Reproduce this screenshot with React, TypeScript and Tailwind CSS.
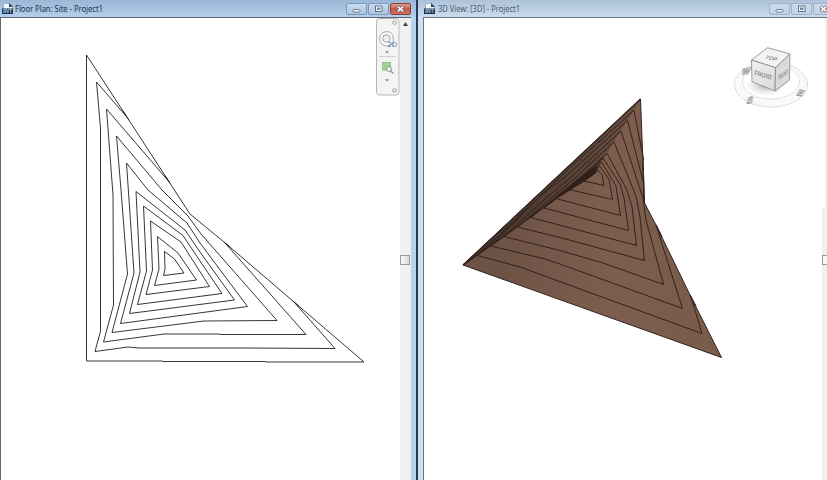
import React from "react";

const planContours = [
  "86.5,55 86.5,361 162,361 163,361.5 265,361.5 266,362 364,362 224,242 190,214 86.5,55",
  "127,117.2 96.5,82 100.5,128 100.5,331 95,351.5 128,347 139,348 243,348 335,348.5 294,302",
  "169,181.7 106.5,109 113,195 113.5,305 103.5,342 164,334 219,334 220,334.5 306,334.5 225,243",
  "116.5,136 162,190 188,216 201,234 277,320.5 204,321 112,332.5 127.5,274 121,190 116.5,136",
  "126.5,163 148,190 187,223 200,243 247.5,306.5 120.5,323.5 134,273 126.5,163",
  "136,191.5 185,230 200,252 234.5,300 129.5,313.5 140,272 136,191.5",
  "143.5,206 183,235.5 200,261 222,293.5 137.5,304.5 146.5,271 143.5,206",
  "150.5,221 181,242 209.5,286.5 146,294.5 152.5,270 150.5,221",
  "157.5,236.5 178,253 196.5,280 154.5,285.5 159,269 157.5,236.5",
  "164.5,251.5 174.5,259 184,273 163.5,275.5 165,269 164.5,251.5",
];

const frontContours = [
  "477.5,255.5 520,267 560,281.7 702,333.5 691,297",
  "491,246 545,259 560,264 682.5,308.5 656,225",
  "504,236.5 560,250.5 603,263 663.5,284.5 646,220 643,198 621,131",
  "517.5,227 560,237.5 644.5,260.5 640,217 636,196 614,142",
  "531,217.5 636.5,245.5 632,207 627,190 607,153.5",
  "544,208 628.5,230.5 624,198 620,184 603,158",
  "556,198.5 620.5,215.5 616,186 601.5,162",
  "569,189.5 612.5,199.5 609,179 599.5,166",
  "584,181 604,185.5 602,175 597.5,170",
  "634,110.5 643.7,160",
  "627.5,120.5 643.8,184",
];

const backContours = [
  "634,110.5 575,163 477.5,255.5",
  "627.5,120.5 565,177 540,196 491,246",
  "621,131 570,178 545,199 504,236.5",
  "614,142 575,178 554,196 517.5,227",
  "607,153.5 580,178 531,217.5",
  "603,158 580,180 544,208",
  "601.5,162 556,198.5",
  "599.5,166 569,189.5",
  "597.5,170 584,181",
];

function DocIcon() {
  return (
    <svg className="h-[12px] w-[12px] shrink-0" viewBox="0 0 12 12">
      <path d="M1.5.5h6l3 3v5h-9z" fill="#f7fafd" stroke="#8ba0b5" strokeWidth=".8" />
      <path d="M7 0l4 4H7z" fill="#174575" />
      <rect x="0" y="5.5" width="11" height="5.5" fill="#173653" />
      <text x="1.2" y="10" fontSize="4.5" fontWeight="700" fill="#bfd5e8" fontFamily="Liberation Sans, sans-serif">RVT</text>
    </svg>
  );
}

function CaptionButton({ kind, active }: { kind: "min" | "max" | "close"; active?: boolean }) {
  const red = kind === "close" && active;
  return (
    <div
      className={`flex h-[12px] w-[21px] shrink-0 items-center justify-center rounded-[2px] border ${
        red
          ? "border-[#83403d] bg-linear-to-b from-[#dfa096] via-[#c75547] to-[#cf735f]"
          : active
            ? "border-[#7c99bb] bg-linear-to-b from-[#c9dcf0] to-[#a8c5e3]"
            : "border-[#9fb2ca] bg-linear-to-b from-[#cbdcee] to-[#bfd2e8]"
      }`}
    >
      <svg className="h-[8px] w-[11px]" viewBox="0 0 11 8">
        {kind === "min" && <rect x="2" y="4.5" width="7" height="2.5" rx="1" fill="#f8fafc" stroke="#53657b" strokeWidth=".8" />}
        {kind === "max" && (
          <>
            <rect x="2.5" y="1" width="6.5" height="5.5" fill="#f8fafc" stroke="#53657b" strokeWidth=".9" />
            <rect x="4.5" y="3" width="2.5" height="1.5" fill="#a9bed5" stroke="#53657b" strokeWidth=".7" />
          </>
        )}
        {kind === "close" && (
          <>
            <path d="M2.5 1.5 8.5 6.5M8.5 1.5 2.5 6.5" stroke="#635362" strokeWidth="3" />
            <path d="M2.8 1.6 8.2 6.4M8.2 1.6 2.8 6.4" stroke="#fff" strokeWidth="1.7" />
          </>
        )}
      </svg>
    </div>
  );
}

function NavigationBar() {
  return (
    <svg className="absolute top-0 right-0 h-[79px] w-[24px]" viewBox="0 0 24 79">
      <rect x=".5" y=".5" width="22.5" height="76.5" rx="3" fill="#f4f4f4" stroke="#b5b5b5" />
      <g fill="none" stroke="#a9a9a9" strokeWidth=".9">
        <circle cx="18.5" cy="4.5" r="2" />
        <path d="M17.6 3.6l1.8 1.8m0-1.8-1.8 1.8" strokeWidth=".6" />
        <circle cx="18.5" cy="72.5" r="2" />
        <path d="M17.3 72.3h2.4l-1.2 1.1z" strokeWidth=".5" />
        <path d="M3 38.5h17" stroke="#c9c9c9" />
        <path
          d="M10.8 13.7c-4.3 0-7 2.7-7 7 0 4.4 3 7.1 7 7.1h3.4v-2.5l3 2.5v-7.3c0-4.2-2.2-6.8-6.4-6.8z"
          fill="#fff"
          stroke="#989898"
        />
        <circle cx="10.5" cy="20.5" r="3.8" fill="#eee" stroke="#989898" />
      </g>
      <text x="11.5" y="29" fontSize="7.5" fontFamily="Liberation Sans, sans-serif" fill="#4d83b5">2D</text>
      <path d="M9 33.2h4l-2 2.4zM9 61.2h4l-2 2.4z" fill="#858585" />
      <rect x="6.5" y="44.5" width="8" height="7.5" fill="#a5cf99" stroke="#91b286" strokeWidth=".8" />
      <circle cx="13" cy="51" r="2.5" fill="#eef3ee" stroke="#8c9c90" />
      <path d="M14.8 53l2.6 2.4" stroke="#84968d" strokeWidth="1.4" />
    </svg>
  );
}

function ViewCube() {
  return (
    <g fontFamily="Liberation Sans, sans-serif">
      <defs>
        <radialGradient id="cubeShadow">
          <stop offset="0" stopColor="#777" stopOpacity=".65" />
          <stop offset="1" stopColor="#bbb" stopOpacity="0" />
        </radialGradient>
        <linearGradient id="cubeFront" x2="1" y2="1">
          <stop stopColor="#f1f1f1" />
          <stop offset="1" stopColor="#d9d9d9" />
        </linearGradient>
      </defs>
      <ellipse cx="771" cy="84.5" rx="36.5" ry="22.5" fill="#f9f9f9" stroke="#c6c6c6" strokeWidth=".8" strokeDasharray="3 1" />
      <ellipse cx="771" cy="81.5" rx="28.5" ry="17.5" fill="#fff" stroke="#cecece" strokeWidth=".8" strokeDasharray="3 1" />
      <ellipse cx="766" cy="85" rx="20" ry="11" fill="url(#cubeShadow)" />
      <g fontSize="9" fontWeight="700" fill="#fafafa" stroke="#959595" strokeWidth=".7">
        <text transform="translate(741 75) rotate(-8) skewX(-25)">W</text>
        <text transform="translate(746 104) rotate(-8) skewX(-25)">S</text>
        <text transform="translate(796 95) rotate(14) skewX(-15)">E</text>
      </g>
      <g stroke="#858585" strokeWidth=".8" strokeLinejoin="round">
        <path d="M751.5 60 767.5 47.7 790 54 775.5 67.7z" fill="#f3f3f3" />
        <path d="M751.5 60 775.5 67.7 775 91 752 81.7z" fill="url(#cubeFront)" />
        <path d="M775.5 67.7 790 54 789.5 80 775 91z" fill="#dadada" />
      </g>
      <g fill="#8d8d8d" fontWeight="700">
        <text transform="matrix(.95 .22 -.55 .7 764.5 58.5)" fontSize="6.5" textLength="12" lengthAdjust="spacingAndGlyphs">TOP</text>
        <text transform="matrix(.96 .28 .02 1 754.5 75)" fontSize="7" textLength="18.5" lengthAdjust="spacingAndGlyphs">FRONT</text>
        <text transform="matrix(.68 -.45 0 1 778.5 80)" fontSize="7" textLength="14" lengthAdjust="spacingAndGlyphs">RIGHT</text>
      </g>
    </g>
  );
}

function PlanDrawing() {
  return (
    <svg className="h-full w-[397px] shrink-0" viewBox="2 18 397 462" fill="none" stroke="#202020" strokeWidth=".9">
      {planContours.map((points) => <polyline key={points} points={points} />)}
      <path d="M123 111l6 9.2M165 175.6l5 7.6M224 242l6 5.1M293 301.1l6 5.2" strokeWidth="1" />
    </svg>
  );
}

function SurfaceDrawing() {
  return (
    <svg className="h-full w-[398px] shrink-0" viewBox="424 18 398 462" fill="none">
      <defs>
        <linearGradient id="surface" gradientUnits="userSpaceOnUse" x1="500" y1="240" x2="680" y2="240">
          <stop stopColor="#6d5345" />
          <stop offset=".6" stopColor="#7d5e4e" />
          <stop offset="1" stopColor="#7a5c4c" />
        </linearGradient>
        <linearGradient id="shade" gradientUnits="userSpaceOnUse" x1="485" y1="240" x2="640" y2="100">
          <stop stopColor="#44352e" />
          <stop offset="1" stopColor="#6a5042" />
        </linearGradient>
      </defs>
      <path d="M640.5 99 644.5 203 656 225 691 297 721.5 357.5 463 265z" fill="url(#surface)" stroke="#30231e" strokeWidth="1" />
      <path d="M463 265 640.5 99 607 153.5 597 171 584 181 556 198.5 504 236.5z" fill="url(#shade)" />
      <path d="M640.5 99 607 153.5 597 169 603 158 634 110.5z" fill="#745748" />
      <path d="M598 166 590 169 553 199 584 181 596 173z" fill="#30241f" />
      <g stroke="#301d18" strokeWidth=".95">
        {frontContours.map((points) => <polyline key={points} points={points} />)}
        {backContours.map((points) => <polyline key={points} points={points} />)}
        <path d="M463 265 504 236.5 556 198.5 584 181 595 173" strokeWidth="1.1" />
      </g>
      <path d="M463 265 640.5 99M656 225l6 12.3M690 295l6 11.5M643 160l1.2 43" stroke="#2f241f" strokeWidth="1.3" />
      <ViewCube />
    </svg>
  );
}

export default function App() {
  return (
    <main className="flex h-[480px] w-[827px] overflow-hidden bg-[#b9d2eb] font-['Noto_Sans',sans-serif]">
      <section className="flex w-[418px] shrink-0 flex-col border-r-2 border-[#243b50]">
        <header className="flex h-[17px] shrink-0 items-center bg-linear-to-b from-[#9ab7d7] to-[#b4cfeb] pl-[2px]">
          <DocIcon />
          <svg className="ml-px h-[17px] w-[100px]" viewBox="0 0 100 17">
            <text x="0" y="12" fontSize="8.5" textLength="88" lengthAdjust="spacingAndGlyphs" fill="#1d3045">Floor Plan: Site - Project1</text>
          </svg>
          <div className="mr-[5px] ml-auto flex gap-px">
            <CaptionButton kind="min" active />
            <CaptionButton kind="max" active />
            <CaptionButton kind="close" active />
          </div>
        </header>
        <div className="flex min-h-0 flex-1">
          <div className="relative flex w-[400px] shrink-0 border-t border-l border-[#5c6873] bg-white pl-px">
            <PlanDrawing />
            <NavigationBar />
          </div>
          <div className="flex w-[11px] shrink-0 flex-col items-center border-t border-[#5c6873] bg-[#f0f0f0]">
            <svg className="mt-[4px] h-[4px] w-[5px] shrink-0" viewBox="0 0 5 4"><path d="M2.5 0 5 4H0z" fill="#444" /></svg>
            <div className="mt-[229px] mr-px h-[10px] w-[10px] shrink-0 border border-[#9b9b9b] bg-linear-to-r from-[#f8f8f8] to-[#d9d9d9]" />
          </div>
          <div className="flex-1 bg-[#b7d2ee]" />
        </div>
      </section>
      <section className="flex min-w-0 flex-1 flex-col bg-[#cddff1]">
        <header className="flex h-[17px] shrink-0 items-center bg-linear-to-b from-[#adc2d9] to-[#cbdced] pl-[6px]">
          <DocIcon />
          <svg className="ml-[2px] h-[17px] w-[100px]" viewBox="0 0 100 17">
            <text x="0" y="12" fontSize="8.5" textLength="82" lengthAdjust="spacingAndGlyphs" fill="#4b5b6b">3D View: [3D] - Project1</text>
          </svg>
          <div className="-mr-[7px] ml-auto flex gap-px">
            <CaptionButton kind="min" />
            <CaptionButton kind="max" />
            <CaptionButton kind="close" />
          </div>
        </header>
        <div className="ml-[5px] flex min-h-0 flex-1 border-t border-l border-[#6b7580] bg-white">
          <SurfaceDrawing />
          <div className="flex w-[5px] flex-col overflow-hidden bg-[#f0f0f0]">
            <div className="h-[190px] w-[3px] shrink-0 bg-white" />
            <div className="mt-[47px] h-[10px] w-[10px] shrink-0 border border-[#9b9b9b] bg-[#f7f7f7]" />
          </div>
        </div>
      </section>
    </main>
  );
}
